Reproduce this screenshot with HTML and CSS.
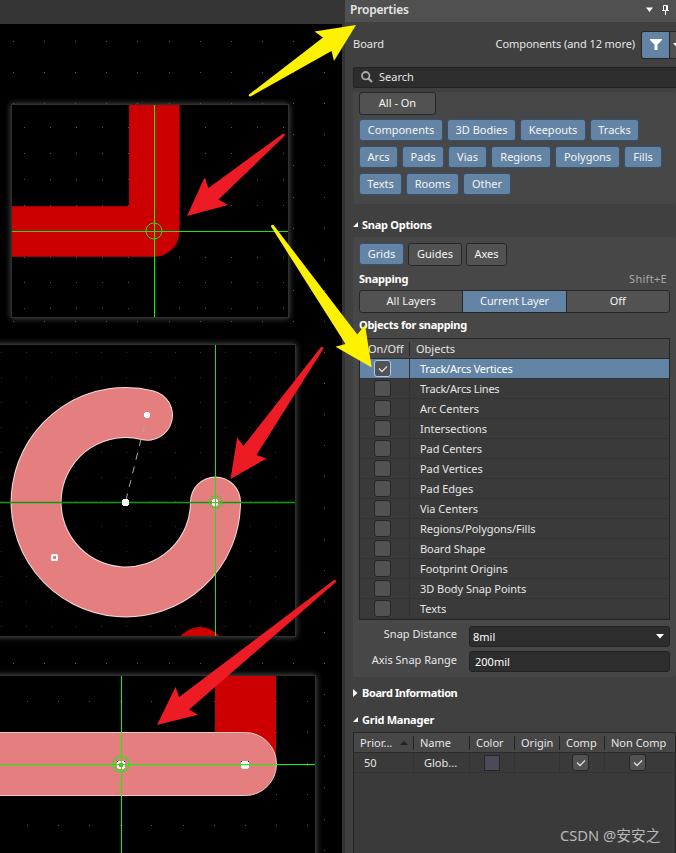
FILE: index.html
```html
<!DOCTYPE html>
<html lang="en">
<head>
<meta charset="utf-8">
<title>Properties</title>
<link rel="stylesheet" href="styles.css">
</head>
<body>
<main class="app">
  <section class="workspace">
    <div class="toolbar"></div>
    <svg class="board" width="342" height="829" viewBox="0 24 342 829">
      <defs>
        <filter id="glow" x="-10%" y="-10%" width="120%" height="120%"><feGaussianBlur stdDeviation="3"/></filter>
        <clipPath id="clipB"><rect x="0" y="345" width="295" height="291"/></clipPath>
      </defs>
      <g class="dots" data-x="13" data-y="41" data-step="31.1" data-cols="11" data-rows="27"></g>

      <rect class="glow" x="11" y="104" width="278" height="214"/>
      <rect class="view" x="11.5" y="104.5" width="277" height="213"/>
      <g class="dots" data-x="24" data-y="127" data-step="25.9" data-cols="11" data-rows="8"></g>
      <path d="M154.3 105V231.500H12" class="track"/>
      <path d="M12 231.500H288" class="cross soft"/>
      <path d="M154.500 105V317" class="cross"/>
      <circle cx="154" cy="231" r="8" class="ring"/>

      <rect class="glow" x="-9" y="344" width="305" height="293"/>
      <rect class="view" x="-9.500" y="344.500" width="305" height="292"/>
      <g class="dots dim" data-x="1" data-y="352" data-step="24.9" data-cols="12" data-rows="12"></g>
      <circle cx="200" cy="652" r="25" class="pad" clip-path="url(#clipB)"/>
      <path d="M215.500 502A89.700 89.700 0 1 1 147.500 415.200" class="arc-edge"/>
      <path d="M215.500 502A89.700 89.700 0 1 1 147.500 415.200" class="arc"/>
      <path d="M147 415L125.500 502" class="radius"/>
      <path d="M0 502.500H295" class="cross mute"/>
      <path d="M215.500 345V636" class="cross soft"/>
      <path d="M145 412h4v1h1v4h-1v1h-4v-1h-1v-4h1z" class="grip"/>
      <path d="M123 499h5v1h1v5h-1v1h-5v-1h-1v-5h1z" class="grip"/>
      <path d="M213 499h4v1h1v5h-1v1h-4v-1h-1v-5h1z" class="grip"/>
      <rect x="52" y="555" width="5" height="5" rx="0.500" class="grip-open"/>
      <circle cx="215.500" cy="502" r="6.300" class="ring"/>
      <path d="M211 502.500H220M215.500 498V507" class="cross soft"/>

      <rect class="glow" x="-9" y="675" width="325" height="190"/>
      <rect class="view" x="-9.500" y="675.500" width="325" height="190"/>
      <g class="dots" data-x="27" data-y="701" data-step="31.1" data-cols="10" data-rows="5"></g>
      <rect x="215" y="676" width="61" height="88" class="pad"/>
      <path d="M-5 732.500H245.500A31 31.500 0 0 1 245.500 795.500H-5" class="selected"/>
      <path d="M117 761h8v7h-8zM241 761h8v7h-8z" fill="#000"/>
      <path d="M118 761h6v1h1v6h-1v1h-6v-1h-1v-6h1z" class="grip"/>
      <path d="M242 761h6v1h1v6h-1v1h-6v-1h-1v-6h1z" class="grip"/>
      <rect x="119" y="763" width="4" height="4" class="grip-core"/>
      <path d="M0 764.500H315" class="cross"/>
      <path d="M121.500 676V853" class="cross"/>
      <circle cx="121.300" cy="764" r="8" class="ring bright"/>
    </svg>
  </section>

  <aside class="panel">
    <header class="titlebar">
      <h1>Properties</h1>
      <svg width="28" height="12" viewBox="0 0 28 12"><path d="M0 3.500h7L3.500 8z" fill="#fff"/><path d="M17.500 1.500h4v5h-4zM16 6.500h7M19.500 6.500v4.500" fill="none" stroke="#fff"/><path d="M20 2h2v5h-2z" fill="#fff"/></svg>
    </header>
    <div class="context">
      <span>Board</span>
      <span class="scope">Components (and 12 more)</span>
      <div class="filter">
        <div class="funnel"><svg width="12" height="11" viewBox="0 0 12 11"><path d="M0 0h12v1L7.500 5.500V11h-3V5.500L0 1z" fill="#fff"/></svg></div>
        <div class="more"><svg width="7" height="4" viewBox="0 0 7 4"><path d="M0 0h7L3.500 4z" fill="#fff"/></svg></div>
      </div>
    </div>
    <div class="search">
      <svg width="12" height="12" viewBox="0 0 12 12"><circle cx="4.700" cy="4.700" r="3.700" fill="none" stroke="#aaa" stroke-width="1.800"/><path d="M7.500 7.500L11 11" stroke="#aaa" stroke-width="2.200"/></svg>
      <span>Search</span>
    </div>

    <div class="group selection">
      <div class="btn all">All - On</div>
      <div class="chips"><div class="btn on w84">Components</div><div class="btn on w68">3D Bodies</div><div class="btn on w66">Keepouts</div><div class="btn on w49">Tracks</div></div>
      <div class="chips"><div class="btn on w39">Arcs</div><div class="btn on w42">Pads</div><div class="btn on w39">Vias</div><div class="btn on w60">Regions</div><div class="btn on w65">Polygons</div><div class="btn on w38">Fills</div></div>
      <div class="chips"><div class="btn on w43">Texts</div><div class="btn on w53">Rooms</div><div class="btn on w48">Other</div></div>
    </div>

    <h2 class="snap-title"><svg width="6" height="6" viewBox="0 0 6 6"><path d="M5 0v5H0z" fill="#fff"/></svg>Snap Options</h2>
    <div class="group snap">
      <div class="modes"><div class="btn on w45">Grids</div><div class="btn w54">Guides</div><div class="btn w41">Axes</div></div>
      <div class="caption"><b>Snapping</b><span>Shift+E</span></div>
      <div class="segments"><div>All Layers</div><div class="active">Current Layer</div><div>Off</div></div>
      <div class="caption objects"><b>Objects for snapping</b></div>
      <div class="objects-table">
        <div class="head"><span>On/Off</span><span>Objects</span></div>
        <div class="row picked"><i class="check"><svg width="10" height="8" viewBox="0 0 10 8"><path d="M1 3.500L4 6.500L9 1.500"/></svg></i><span>Track/Arcs Vertices</span></div>
        <div class="row"><i class="check"></i><span class="tight">Track/Arcs Lines</span></div>
        <div class="row"><i class="check"></i><span>Arc Centers</span></div>
        <div class="row"><i class="check"></i><span>Intersections</span></div>
        <div class="row"><i class="check"></i><span>Pad Centers</span></div>
        <div class="row"><i class="check"></i><span>Pad Vertices</span></div>
        <div class="row"><i class="check"></i><span>Pad Edges</span></div>
        <div class="row"><i class="check"></i><span>Via Centers</span></div>
        <div class="row"><i class="check"></i><span>Regions/Polygons/Fills</span></div>
        <div class="row"><i class="check"></i><span>Board Shape</span></div>
        <div class="row"><i class="check"></i><span>Footprint Origins</span></div>
        <div class="row"><i class="check"></i><span>3D Body Snap Points</span></div>
        <div class="row"><i class="check"></i><span>Texts</span></div>
      </div>
      <div class="field"><label>Snap Distance</label><div class="input select">8mil<svg width="8" height="5" viewBox="0 0 8 5"><path d="M0 0h8L4 4.500z" fill="#fff"/></svg></div></div>
      <div class="field"><label>Axis Snap Range</label><div class="input">200mil</div></div>
    </div>

    <h2 class="info-title"><svg width="6" height="8" viewBox="0 0 6 8"><path d="M0 0v8L4.500 4z" fill="#fff"/></svg>Board Information</h2>
    <h2 class="grid-title"><svg width="6" height="6" viewBox="0 0 6 6"><path d="M5 0v5H0z" fill="#fff"/></svg>Grid Manager</h2>
    <div class="grid-table">
      <div class="grid-row grid-head"><span>Prior...<svg width="8" height="4" viewBox="0 0 8 4"><path d="M0 4h8L4 0z" fill="#222"/></svg></span><span>Name</span><span>Color</span><span>Origin</span><span>Comp</span><span>Non Comp</span></div>
      <div class="grid-row grid-body"><span>50</span><span>Glob...</span><span><i class="swatch"></i></span><span></span><span><i class="check"><svg width="10" height="8" viewBox="0 0 10 8"><path d="M1 3.500L4 6.500L9 1.500"/></svg></i></span><span><i class="check"><svg width="10" height="8" viewBox="0 0 10 8"><path d="M1 3.500L4 6.500L9 1.500"/></svg></i></span></div>
    </div>
  </aside>

  <svg class="arrows" width="676" height="853" viewBox="0 0 676 853">
    <g fill="#fff200">
      <path d="M249 94.500L323 37.500L314.500 31.500L356 25L334 61L331.500 51L250.500 96.500Q248 96.500 249 94.500z"/>
      <path d="M271 226.500Q271 224 273.500 225L357.300 334.500L365 325L371.700 367.500L335.500 346.700L345.500 344z"/>
    </g>
    <g fill="#ed1c24">
      <path d="M187 216L204.500 177.500L208.500 188L282.500 134Q285.500 133 284.500 136L218.500 199.500L228 205z"/>
      <path d="M230.500 479L237.200 437.500L243.500 446L321 347Q323.500 346 323.500 348.500L256.500 455L266.500 458.500z"/>
      <path d="M157 725L175.500 687L179.200 697L334 580Q336.500 579.500 336 582L189.200 709.500L198 714.700z"/>
    </g>
  </svg>
  <div class="watermark">CSDN @安安之</div>
</main>
<script src="dots.js"></script>
</body>
</html>
```
FILE: dots.js
```js
// Fills each grid group with pixel-aligned dots inside its view.
document.querySelectorAll('.dots').forEach(function (g) {
  var d = g.dataset, step = +d.step;
  for (var r = 0; r < +d.rows; r++) {
    for (var c = 0; c < +d.cols; c++) {
      var dot = document.createElementNS('http://www.w3.org/2000/svg', 'rect');
      dot.setAttribute('x', Math.round(+d.x + c * step));
      dot.setAttribute('y', Math.round(+d.y + r * step));
      dot.setAttribute('width', 1);
      dot.setAttribute('height', 1);
      g.appendChild(dot);
    }
  }
});
```
FILE: styles.css
```css
* { box-sizing: border-box; }
body { margin: 0; background: #404040; overflow: hidden; }
.app { position: relative; display: flex; width: 676px; height: 853px; overflow: hidden; font: 11px/14px "Noto Sans", "Noto Sans CJK SC", sans-serif; color: #e6e6e6; white-space: nowrap; }
.workspace { width: 345px; flex: none; background: #333; }
.toolbar { height: 24px; background: #353535; }
.board { display: block; background: #000; }
.dots { fill: #555; }
.dots.dim { fill: #303030; }
.glow { fill: #555; filter: url(#glow); }
.view { fill: #000; stroke: #303030; }
.track { fill: none; stroke: #c00; stroke-width: 50.500; stroke-linejoin: round; }
.pad { fill: #c00; }
.cross { fill: none; stroke: #0f0; }
.cross.soft { stroke: #1be21b; }
.cross.mute { stroke: #0a9c0a; stroke-width: 1.500; }
.ring { fill: none; stroke: #1be21b; }
.ring.bright { stroke: #0f0; stroke-width: 1.200; }
.arc-edge, .arc { fill: none; stroke: #f4dcdc; stroke-width: 51; stroke-linecap: round; }
.arc { stroke: #e57f7f; stroke-width: 49; }
.radius { stroke: #aaa; stroke-dasharray: 7 7; stroke-dashoffset: 3; }
.selected { fill: #e57f7f; stroke: #e8c8c8; }
.grip { fill: #fff; }
.grip-open { fill: #e57f7f; stroke: #fff; stroke-width: 2; }
.grip-core { fill: #c07070; }

.panel { width: 331px; flex: none; background: #404040; display: flex; flex-direction: column; }
.titlebar { height: 22px; flex: none; padding: 0 5px 2px; background: #505050; display: flex; align-items: center; justify-content: space-between; }
.titlebar h1 { margin: 0; font-size: 12px; font-weight: 600; letter-spacing: -0.2px; }
.titlebar svg { margin-right: -3px; }
.context { height: 45px; flex: none; display: flex; align-items: center; padding-left: 8px; }
.scope { margin-left: auto; padding-right: 6px; letter-spacing: -0.08px; }
.context > span { padding-bottom: 1px; }
.filter { display: flex; flex: none; width: 35px; height: 28px; overflow: hidden; background: #505050; border: 1px solid #252525; border-right: 0; border-radius: 3px 0 0 3px; }
.funnel { width: 27px; flex: none; background: #6384a5; display: flex; align-items: center; justify-content: center; }
.more { width: 12px; flex: none; border-left: 1px solid #252525; padding-left: 3px; display: flex; align-items: center; }
.search { height: 21px; flex: none; margin-left: 8px; padding: 0 0 1px 7px; display: flex; align-items: center; gap: 6px; background: #2d2d2d; border: 1px solid #222; border-right: 0; border-radius: 3px 0 0 3px; }
.group { flex: none; margin-left: 8px; padding: 6px; background: #474747; border-radius: 3px; }
.btn { height: 23px; padding-bottom: 1px; display: flex; align-items: center; justify-content: center; background: #525252; border: 1px solid #262626; border-radius: 3px; color: #f4f4f4; }
.btn.on { height: 22px; padding-bottom: 0; background: #6384a5; border-color: #35506c; }
.selection { height: 112px; margin-top: 4px; padding-top: 0; display: flex; flex-direction: column; gap: 5px; }
.btn.all { width: 77px; margin-bottom: -1px; padding-bottom: 2px; }
.chips, .modes { display: flex; gap: 4px; }
.w84 { width: 84px; } .w68 { width: 69px; } .w66 { width: 66px; } .w49 { width: 49px; }
.w39 { width: 39px; } .w42 { width: 42px; } .w60 { width: 60px; } .w65 { width: 65px; }
.w38 { width: 38px; } .w43 { width: 43px; } .w53 { width: 53px; } .w48 { width: 48px; }
.w45 { width: 45px; } .w54 { width: 54px; } .w41 { width: 41px; }
h2 { flex: none; margin: 0 0 0 8px; font-size: 11px; line-height: 14px; font-weight: 700; letter-spacing: -0.25px; color: #fff; display: flex; align-items: center; gap: 3px; }
.snap-title { margin-top: 14px; margin-bottom: 5px; }
.snap { height: 440px; }
.caption { height: 24px; width: 308px; padding-top: 6px; display: flex; justify-content: space-between; letter-spacing: 0.3px; color: #aaa; }
.caption b { color: #fff; letter-spacing: -0.25px; }
.segments { display: flex; width: 311px; height: 23px; border: 1px solid #262626; border-radius: 3px; background: #525252; }
.segments div { flex: 1; padding-bottom: 1px; display: flex; align-items: center; justify-content: center; color: #f4f4f4; }
.segments .active { background: #6384a5; border: solid #262626; border-width: 0 1px; letter-spacing: -0.15px; }
.caption.objects { height: 25px; padding-top: 5px; }
.caption.objects b { letter-spacing: -0.3px; }
.objects-table { width: 311px; height: 282px; background: #3a3a3a; border: 1px solid #252525; }
.head { height: 20px; display: flex; align-items: center; background: #474747; border-bottom: 1px solid #2c2c2c; }
.head span:first-child { width: 50px; padding-left: 8px; border-right: 1px solid #252525; }
.head span:last-child { padding-left: 6px; }
.row { height: 20px; display: flex; border-bottom: 1px solid #333; }
.row .check { margin: 1px 18px 0 14px; }
.row span { border-left: 1px solid #333; padding: 3px 0 0 10px; flex: 1; letter-spacing: -0.04px; }
.row.picked span, .row .tight { letter-spacing: -0.22px; }
.picked { background: #6384a5; color: #fff; }
.check { width: 17px; height: 17px; flex: none; display: flex; align-items: center; justify-content: center; background: #525252; border: 1px solid #262626; border-radius: 3px; }
.picked .check { border-color: #a9cdf2; }
.check path { fill: none; stroke: #ddd; stroke-width: 1.300; }
.field { height: 25px; margin-top: 6px; display: flex; gap: 12px; }
.field + .field { margin-top: 0; }
.field label { width: 98px; padding-top: 1px; text-align: right; }
.field + .field label { padding-top: 2px; }
.input { width: 201px; height: 21px; display: flex; align-items: center; justify-content: space-between; padding: 0 5px; background: #2d2d2d; border: 1px solid #222; border-radius: 3px; color: #fff; }
.select { padding-left: 3px; }
.info-title { margin-top: 9px; letter-spacing: -0.4px; }
.grid-title { margin-top: 13px; }
.grid-table { flex: 1; width: 323px; margin: 5px 0 0 8px; background: #3a3a3a; border: 1px solid #252525; border-bottom: 0; }
.grid-row { display: grid; grid-template-columns: 60px 56px 45px 45px 45px 70px; }
.grid-row span { display: flex; align-items: center; padding-left: 6px; border-right: 1px solid #333; }
.grid-row span:last-child { border-right: 0; }
.grid-head { height: 20px; padding: 3px 0 4px; background: #474747; border-bottom: 1px solid #2c2c2c; }
.grid-head span { border-color: #222; justify-content: space-between; padding-right: 5px; white-space: nowrap; }
.grid-body { height: 20px; border-bottom: 1px solid #333; }
.grid-body span { padding-left: 10px; }
.grid-body span:nth-child(3), .grid-body span:nth-child(n+5) { padding: 0; justify-content: center; }
.grid-body span:nth-child(5) { padding-right: 3px; }
.grid-body span:last-child { padding-right: 5px; }
.swatch { width: 16px; height: 16px; background: #4c4a59; border: 1px solid #252525; }
.arrows { position: absolute; inset: 0; }
.watermark { position: absolute; left: 560px; top: 825px; font: 14.7px/20px "Noto Sans", "Noto Sans CJK SC", sans-serif; color: #b8b8b8; }
```
